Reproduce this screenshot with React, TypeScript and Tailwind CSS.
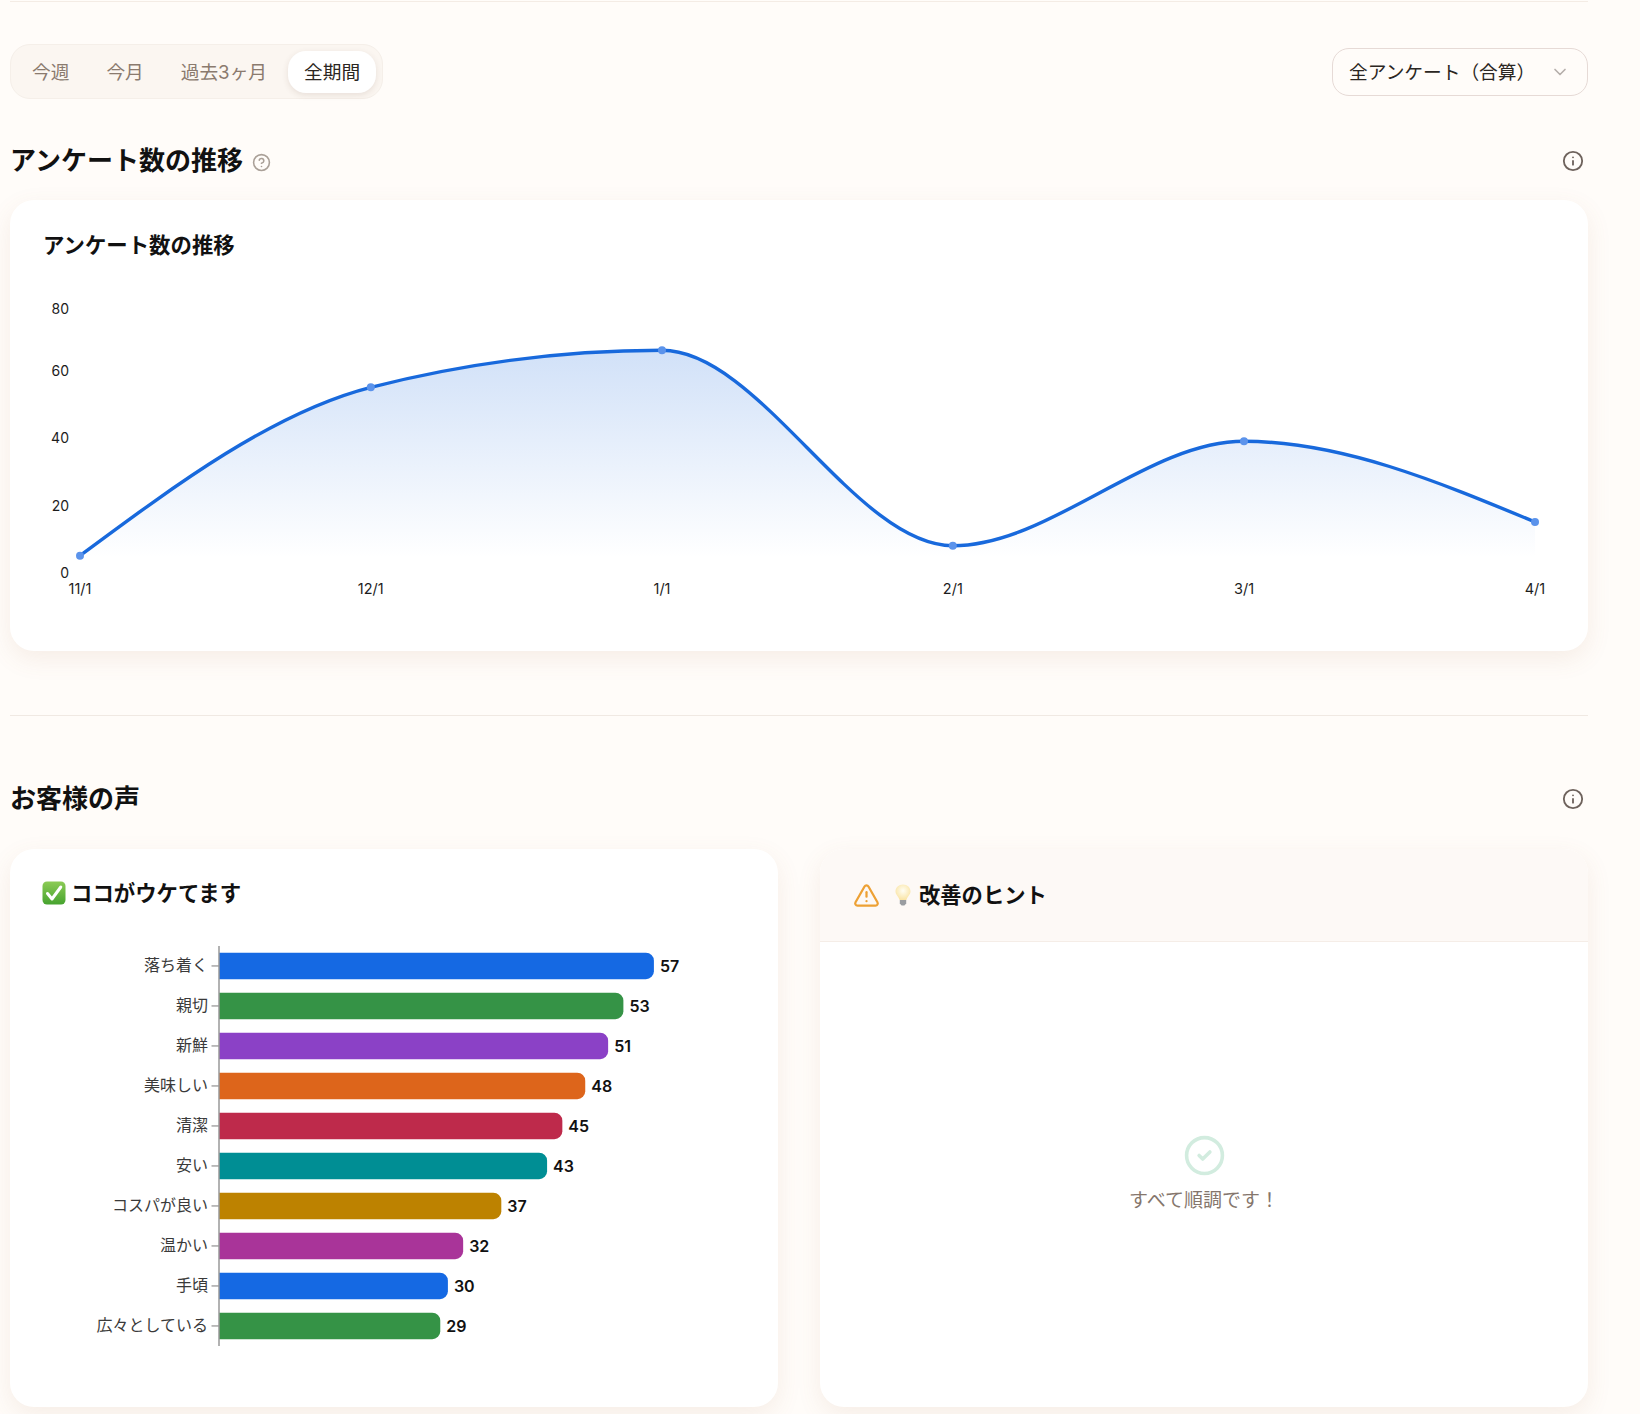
import { ChevronDown, CircleCheck, CircleHelp, Info, TriangleAlert } from 'lucide-react';

const periods = ['今週', '今月', '過去3ヶ月', '全期間'];

const trendPoints = [
  { x: 80, y: 555.7 },
  { x: 370.8, y: 387.3 },
  { x: 662, y: 350.3 },
  { x: 952.8, y: 545.7 },
  { x: 1244, y: 441.3 },
  { x: 1535, y: 522 },
];

const yTicks = [
  { label: '80', y: 308 },
  { label: '60', y: 370 },
  { label: '40', y: 437 },
  { label: '20', y: 505 },
  { label: '0', y: 572 },
];

const xTicks = ['11/1', '12/1', '1/1', '2/1', '3/1', '4/1'];

const trendLine =
  'M80 555.7 C177 483.8 274 412 370.8 387.3 C467.8 362.6 565 350.3 662 350.3 C759 350.3 855.8 545.7 952.8 545.7 C1049.8 545.7 1147 441.3 1244 441.3 C1341 441.3 1438 481.6 1535 522';

const voices = [
  { label: '落ち着く', value: 57, color: '#1569e3' },
  { label: '親切', value: 53, color: '#359346' },
  { label: '新鮮', value: 51, color: '#8b41c6' },
  { label: '美味しい', value: 48, color: '#dd651b' },
  { label: '清潔', value: 45, color: '#be2a4b' },
  { label: '安い', value: 43, color: '#008e94' },
  { label: 'コスパが良い', value: 37, color: '#bd8200' },
  { label: '温かい', value: 32, color: '#a93499' },
  { label: '手頃', value: 30, color: '#1569e3' },
  { label: '広々としている', value: 29, color: '#359346' },
];

const UNIT = 7.63;

function TrendChart() {
  return (
    <svg viewBox="43 280 1512 330" width={1512} height={330} className="block">
      <defs>
        <linearGradient id="trendFill" x1="0" y1="350" x2="0" y2="558" gradientUnits="userSpaceOnUse">
          <stop offset="0" stopColor="#1a69dc" stopOpacity="0.2" />
          <stop offset="1" stopColor="#1a69dc" stopOpacity="0" />
        </linearGradient>
      </defs>
      <path d={`${trendLine} L1535 558 L80 558 Z`} fill="url(#trendFill)" />
      <path d={trendLine} fill="none" stroke="#1869dc" strokeWidth={3.4} />
      {trendPoints.map(p => (
        <circle key={p.x} cx={p.x} cy={p.y} r={4} fill="#5b93eb" />
      ))}
      {yTicks.map(t => (
        <text key={t.label} x={69} y={t.y} textAnchor="end" dominantBaseline="central" className="fill-[#1c1c1c] text-[14px]">
          {t.label}
        </text>
      ))}
      {xTicks.map((t, i) => (
        <text key={t} x={trendPoints[i].x} y={588} textAnchor="middle" dominantBaseline="central" className="fill-[#1c1c1c] text-[14.5px]">
          {t}
        </text>
      ))}
    </svg>
  );
}

function VoicesChart() {
  return (
    <svg viewBox="43 940 700 410" width={700} height={410} className="block">
      {voices.map((v, i) => {
        const top = 952.7 + i * 40;
        const mid = top + 13.25;
        const end = 219 + v.value * UNIT;
        return (
          <g key={v.label}>
            <text x={208} y={mid - 0.5} textAnchor="end" dominantBaseline="central" className="fill-[#3a3a3a] text-[16px]">
              {v.label}
            </text>
            <line x1={211.5} x2={219} y1={mid} y2={mid} stroke="#999" strokeWidth={1.3} />
            <path
              d={`M219 ${top} H${end - 8} a8 8 0 0 1 8 8 V${top + 18.5} a8 8 0 0 1 -8 8 H219 Z`}
              fill={v.color}
            />
            <text x={end + 6} y={mid + 0.5} dominantBaseline="central" className="fill-[#111] text-[16px] font-semibold">
              {v.value}
            </text>
          </g>
        );
      })}
      <line x1={219} x2={219} y1={946} y2={1346} stroke="#999" strokeWidth={1.5} />
    </svg>
  );
}

function CheckEmoji() {
  return (
    <svg viewBox="0 0 24 24" width={24} height={24} className="shrink-0">
      <defs>
        <linearGradient id="checkBox" x1="0" y1="0" x2="0" y2="1">
          <stop offset="0" stopColor="#8ccb55" />
          <stop offset="1" stopColor="#46a32f" />
        </linearGradient>
      </defs>
      <rect x="0.5" y="0.5" width="23" height="23" rx="4.5" fill="url(#checkBox)" />
      <path d="M5.5 12.5 L10 18 L18.8 6" fill="none" stroke="#fff" strokeWidth="3" strokeLinecap="round" strokeLinejoin="round" />
    </svg>
  );
}

function BulbEmoji() {
  return (
    <svg viewBox="0 0 16 22" width={16} height={22} className="shrink-0">
      <defs>
        <radialGradient id="bulbGlass" cx="0.5" cy="0.4" r="0.6">
          <stop offset="0" stopColor="#fffef4" />
          <stop offset="1" stopColor="#fae4a4" />
        </radialGradient>
      </defs>
      <path d="M8 0.5 C3.6 0.5 0.5 3.6 0.5 7.4 C0.5 10.6 3.4 12 4.6 16 H11.4 C12.6 12 15.5 10.6 15.5 7.4 C15.5 3.6 12.4 0.5 8 0.5 Z" fill="url(#bulbGlass)" />
      <path d="M4.8 16 H11.2 V19.4 L9.4 21.5 H6.6 L4.8 19.4 Z" fill="#9a9da1" />
    </svg>
  );
}

function SectionHeading({ title, help }: { title: string; help?: boolean }) {
  return (
    <div className="flex items-center justify-between pr-[4px]">
      <div className="flex items-center gap-[9px]">
        <h2 className="text-[26px] leading-[35px] font-bold text-[#111]">{title}</h2>
        {help && <CircleHelp size={19} strokeWidth={2} className="mt-[3px] text-[#aaa098]" />}
      </div>
      <Info size={22} strokeWidth={2} className="text-[#6e625c]" />
    </div>
  );
}

export default function App() {
  return (
    <div
      lang="ja"
      className="h-[1414px] w-[1640px] overflow-hidden bg-[#fffcf9] pl-[10px] font-['Inter','Noto_Sans_CJK_JP',sans-serif]"
    >
      <div className="w-[1578px]">
        <div className="h-[2px] border-b border-[#f4ece5]" />

        <div className="mt-[42px] flex items-center justify-between">
          <div className="flex h-[55px] items-center gap-[5px] rounded-[20px] border border-[#f5efe9] bg-[#fbf6f1] pl-[5px] pr-[6px]">
            {periods.map(p =>
              p === '全期間' ? (
                <button key={p} className="h-[42px] rounded-[18px] bg-white px-[16px] pt-[3px] text-[18.7px] text-[#2b2622] shadow-[0_2px_6px_rgba(90,60,40,0.12)]">
                  {p}
                </button>
              ) : (
                <button key={p} className="h-[42px] px-[16px] pt-[3px] text-[18.7px] text-[#8a7a6e]">
                  {p}
                </button>
              )
            )}
          </div>
          <button className="flex h-[48px] w-[256px] items-center justify-between rounded-[17px] border border-[#e6dad6] bg-[#fffcf9] pl-[16px] pr-[17px] text-[18.7px] text-[#2b2622]">
            <span className="pt-[3px]">全アンケート（合算）</span>
            <ChevronDown size={20} className="text-[#b5aeaa]" />
          </button>
        </div>

        <div className="mt-[44px]">
          <SectionHeading title="アンケート数の推移" help />
        </div>

        <section className="mt-[22px] h-[451px] rounded-[24px] bg-white pl-[33px] pt-[31px] shadow-[0_8px_24px_rgba(170,110,70,0.1)]">
          <h3 className="mb-[21px] text-[21.4px] leading-[28px] font-bold text-[#111]">アンケート数の推移</h3>
          <TrendChart />
        </section>

        <div className="mt-[64px] h-px bg-[#f0e9e3]" />

        <div className="mt-[65px]">
          <SectionHeading title="お客様の声" />
        </div>

        <div className="mt-[33px] grid grid-cols-2 gap-[42px]">
          <section className="h-[558px] rounded-[24px] bg-white pl-[32px] pt-[30px] shadow-[0_8px_24px_rgba(170,110,70,0.1)]">
            <h3 className="flex h-[28px] items-center gap-[5px] text-[21.4px] font-bold text-[#111]">
              <CheckEmoji />
              ココがウケてます
            </h3>
            <div className="ml-px mt-[33px]">
              <VoicesChart />
            </div>
          </section>

          <section className="flex h-[558px] flex-col overflow-hidden rounded-[24px] bg-white shadow-[0_8px_24px_rgba(170,110,70,0.1)]">
            <div className="flex h-[93px] items-center border-b border-[#f5ede7] bg-[#fdf9f6] pl-[33px]">
              <TriangleAlert size={27} strokeWidth={2} className="text-[#eda135]" />
              <span className="ml-[15px]">
                <BulbEmoji />
              </span>
              <h3 className="ml-[8px] pt-[2px] text-[21.3px] font-bold text-[#111]">改善のヒント</h3>
            </div>
            <div className="flex flex-1 flex-col items-center justify-center gap-[11px] pb-[2px]">
              <CircleCheck size={43} strokeWidth={2} className="text-[#d2ecdf]" />
              <p className="text-[19px] leading-[26px] text-[#85766c]">すべて順調です！</p>
            </div>
          </section>
        </div>
      </div>
    </div>
  );
}
